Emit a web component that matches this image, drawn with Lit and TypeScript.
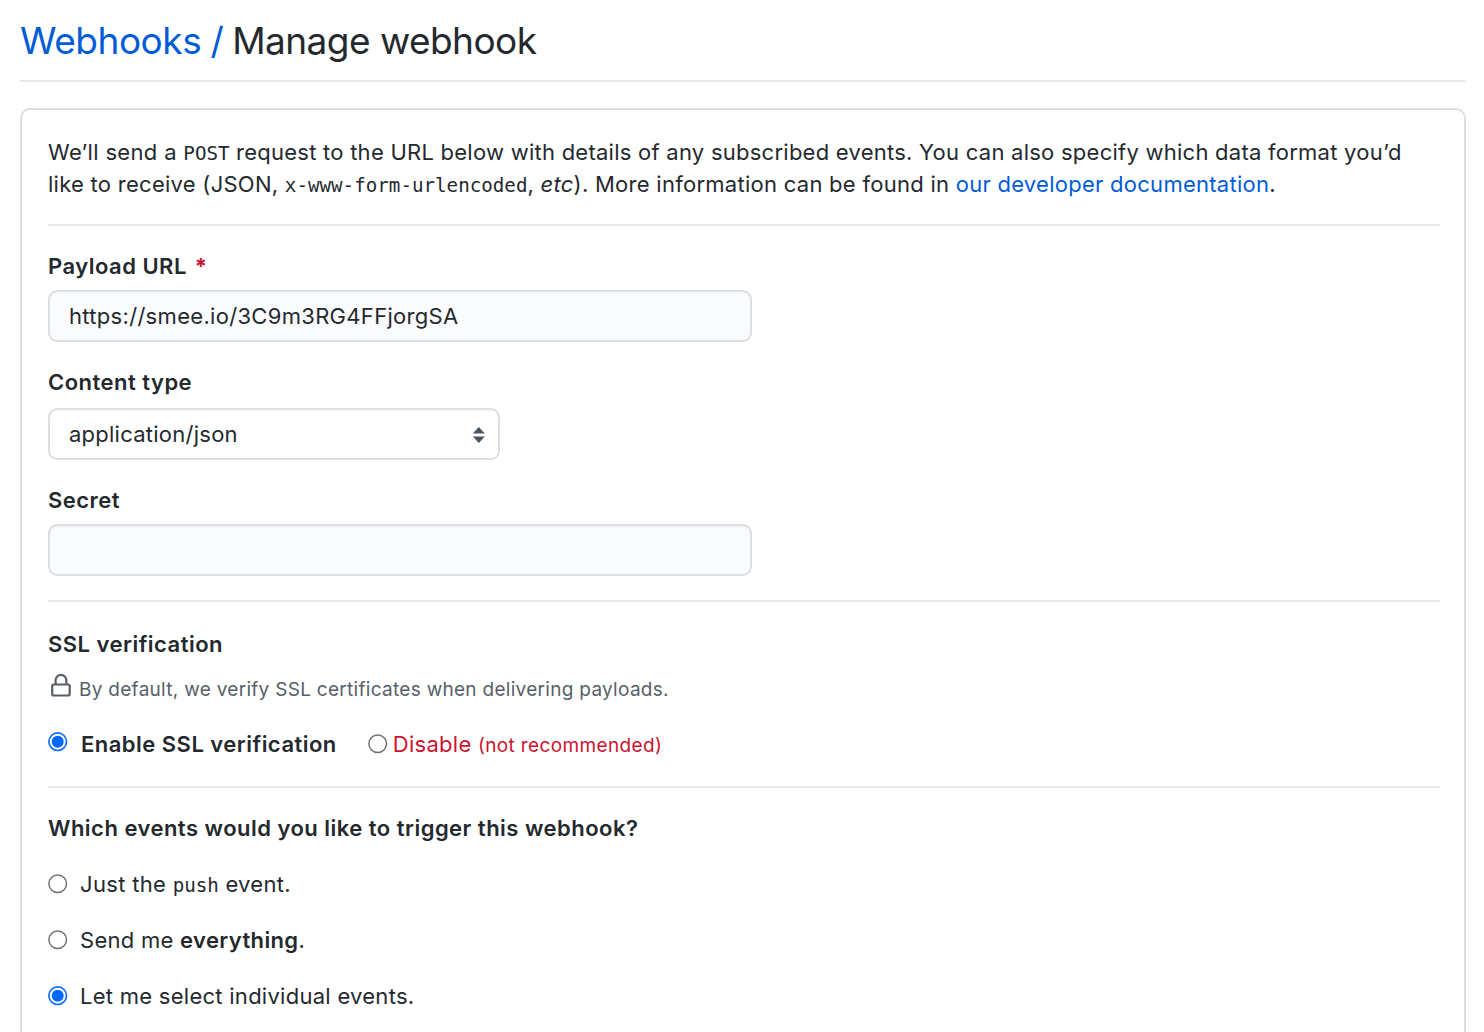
import { LitElement, html, svg, css } from "lit";
import { customElement, property } from "lit/decorators.js";

@customElement("radio-dot")
class RadioDot extends LitElement {
  @property({ type: Boolean }) checked = false;
  static styles = css`
    :host { display: block; flex: none; width: 20px; height: 20px; }
    svg { display: block; }
    .ring { fill: #fff; stroke: #6f6f6f; stroke-width: 1.5; }
    .on { stroke: #0a6cff; stroke-width: 1.7; }
    .dot { fill: #0068ff; }
  `;
  render() {
    return html`<svg width="20" height="20" viewBox="0 0 20 20">
      <circle class="ring ${this.checked ? "on" : ""}" cx="9.7" cy="9.7" r="8.8"></circle>
      ${this.checked ? svg`<circle class="dot" cx="9.7" cy="9.7" r="6"></circle>` : ""}
    </svg>`;
  }
}

@customElement("app-root")
class AppRoot extends LitElement {
  static styles = css`
    :host { display: block; height: 1032px; overflow: hidden; background: #fff; color: #24292e;
      font-family: Inter, "Liberation Sans", sans-serif; font-size: 22px; line-height: 32px; letter-spacing: 0.27px; }
    * { box-sizing: border-box; }
    .page { padding: 0 18px 0 20px; }
    .title { margin: 0; height: 82px; padding-top: 17px; border-bottom: 2px solid #e6e8ec; font-size: 37px;
      line-height: 48px; font-weight: 430; white-space: pre; letter-spacing: -0.54px; }
    .crumb { letter-spacing: -0.45px; }
    .slash { letter-spacing: -1.1px; }
    a { color: #005cd7; text-decoration: none; }
    .box { margin-top: 26px; height: 960px; border: 2px solid #dce0e5; border-radius: 10px; padding: 26px 24px 0 26px; }
    .line { display: flex; align-items: baseline; height: 32px; white-space: pre; }
    .opening { letter-spacing: 0.33px; }
    .request { letter-spacing: 0.25px; }
    .rule { height: 2px; margin-top: 24px; background: #e6e8ec; }
    .label { font-weight: 600; letter-spacing: 0.48px; }
    .block { margin-top: 24px; }
    .ssl-heading { margin-top: 26px; }
    code { font-family: "DejaVu Sans Mono", monospace; font-size: 19.2px; letter-spacing: 0; }
    .req { color: #cb1430; font-weight: 700; margin-left: 8px; }
    .field { width: 704px; height: 52px; margin-top: 8px; border: 2px solid #dce0e5; border-radius: 9px; background: #fafbfc;
      padding: 8px 19px; letter-spacing: 0.31px; box-shadow: inset 0 2px 0 rgba(225,228,232,.2); }
    .select { width: 452px; margin-top: 10px; background: #fff; display: flex; justify-content: space-between;
      padding-right: 12px; letter-spacing: 0.25px; }
    .select svg { margin-top: 8px; }
    .note { display: flex; gap: 7px; height: 32px; margin: 13px 0 0 2px; font-size: 19px; letter-spacing: 0.29px; color: #57606a; }
    .note span { padding-top: 1px; }
    .choices { display: flex; height: 32px; margin: 23px 0 26px; }
    .option { display: flex; height: 32px; }
    .option radio-dot { margin: 6px 12px 0 0; }
    .option.ssl radio-dot { margin-top: 4px; margin-right: 13px; }
    .option.danger radio-dot { margin-right: 5px; }
    .danger { color: #cb1430; margin-left: 31px; }
    .small { font-size: 19px; letter-spacing: 0.36px; }
    .just { letter-spacing: 0.32px; }
    b { font-weight: 600; letter-spacing: 0.37px; }
  `;
  render() {
    return html`<div class="page">
      <h1 class="title"><a class="crumb">Webhooks</a><a class="slash"> / </a>Manage webhook</h1>
      <div class="box">
        <div class="line"><span class="opening">We’ll send a </span><code>POST</code><span class="request"> request to the URL below with details of any subscribed events. You can also specify which data format you’d</span></div>
        <div class="line"><span>like to receive (JSON, </span><code>x-www-form-urlencoded</code><span>, </span><em>etc</em><span>). More information can be found in </span><a>our developer documentation</a><span>.</span></div>
        <div class="rule"></div>
        <div class="line label block"><span>Payload URL</span><span class="req">*</span></div>
        <div class="field">https://smee.io/3C9m3RG4FFjorgSA</div>
        <div class="label block">Content type</div>
        <div class="field select">application/json<svg width="14" height="18"><path d="M.8 7.500 6.800 1l6 6.500zM.8 10.500h12l-6 6.500z" fill="#4b5560"></path></svg></div>
        <div class="label block">Secret</div>
        <div class="field"></div>
        <div class="rule"></div>
        <div class="label ssl-heading">SSL verification</div>
        <div class="note"><svg width="22" height="24" viewBox="0 0 22 24" fill="none" stroke="#57606a" stroke-width="2.2">
            <rect x="2.200" y="11.500" width="17.500" height="11" rx="1.600"></rect>
            <path d="M5.600 11.500V7.200a5.350 5.350 0 0 1 10.700 0v4.300"></path></svg><span>By default, we verify SSL certificates when delivering payloads.</span></div>
        <div class="choices">
          <div class="option ssl"><radio-dot checked></radio-dot><span class="label">Enable SSL verification</span></div>
          <div class="option danger"><radio-dot></radio-dot><div class="line"><span>Disable </span><span class="small">(not recommended)</span></div></div>
        </div>
        <div class="rule"></div>
        <div class="label block">Which events would you like to trigger this webhook?</div>
        <div class="option block"><radio-dot></radio-dot><div class="line just"><span>Just the </span><code>push</code><span> event.</span></div></div>
        <div class="option block"><radio-dot></radio-dot><div class="line"><span>Send me </span><b>everything</b><span>.</span></div></div>
        <div class="option block"><radio-dot checked></radio-dot><span>Let me select individual events.</span></div>
      </div>
    </div>`;
  }
}
